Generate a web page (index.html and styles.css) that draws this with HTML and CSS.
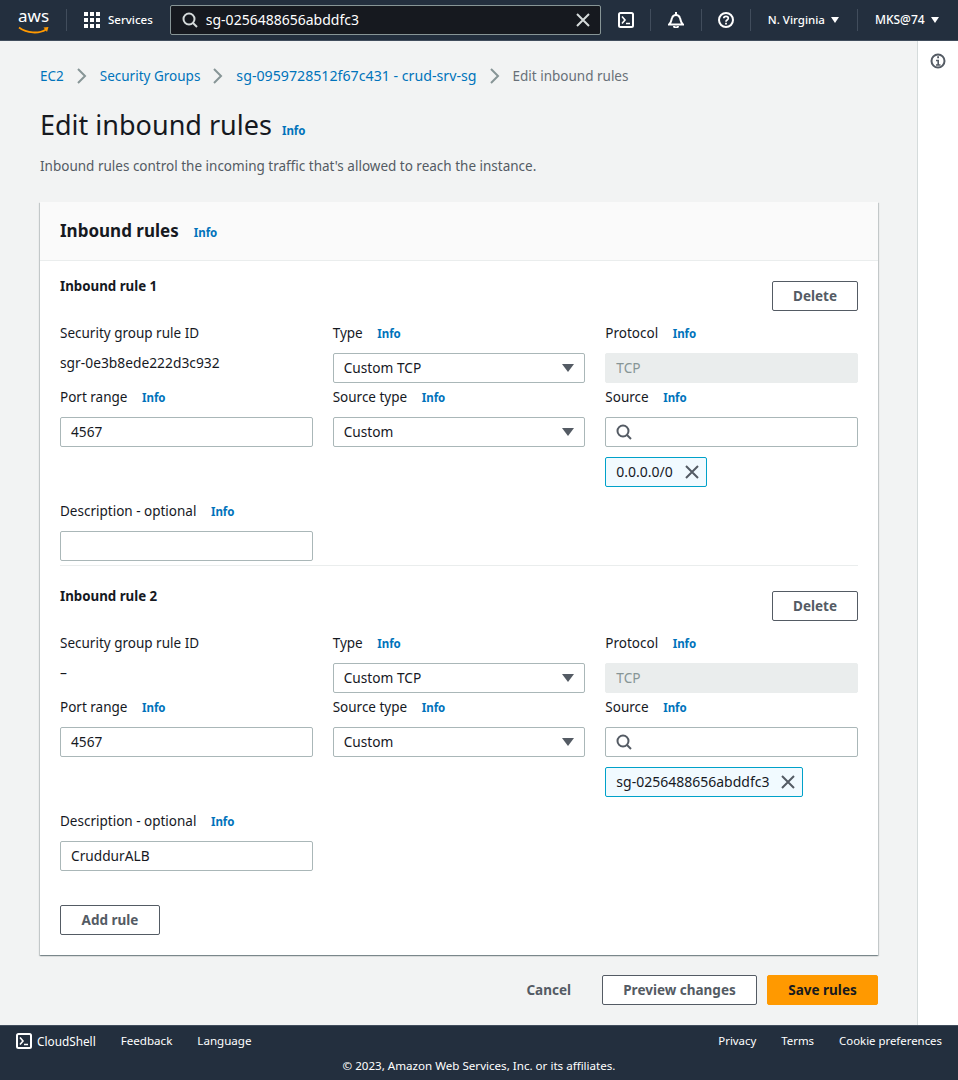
FILE: index.html
```html
<!DOCTYPE html>
<html lang="en">
<head>
<meta charset="utf-8">
<title>Edit inbound rules</title>
<link rel="stylesheet" href="styles.css">
</head>
<body>
<header class="topbar">
  <a class="logo">
    <span class="logo-text">aws</span>
    <svg class="logo-smile" width="32" height="9" viewBox="0 0 32 9"><path d="M1 1.500c8 6 20 6.500 27 2" fill="none" stroke="#f90" stroke-width="1.800"/><path d="M25.500 1.500l5-.5-1.500 5z" fill="#f90"/></svg>
  </a>
  <span class="sep sep-logo"></span>
  <svg class="grid-icon" width="16" height="16" viewBox="0 0 16 16" fill="#fff"><rect width="4" height="4"/><rect x="6" width="4" height="4"/><rect x="12" width="4" height="4"/><rect y="6" width="4" height="4"/><rect x="6" y="6" width="4" height="4"/><rect x="12" y="6" width="4" height="4"/><rect y="12" width="4" height="4"/><rect x="6" y="12" width="4" height="4"/><rect x="12" y="12" width="4" height="4"/></svg>
  <span class="top-text services">Services</span>
  <div class="top-search">
    <svg width="16" height="16" viewBox="0 0 16 16" fill="none" stroke="#d5dbdb" stroke-width="2"><circle cx="7" cy="7" r="5.500"/><path d="M11 11l4 4"/></svg>
    <span class="top-search-text">sg-0256488656abddfc3</span>
    <svg class="top-search-x" width="14" height="14" viewBox="0 0 14 14" stroke="#d5dbdb" stroke-width="2"><path d="M1 1l12 12M13 1L1 13"/></svg>
  </div>
  <svg class="top-icon shell-icon" width="16" height="16" viewBox="0 0 16 16" fill="none" stroke="#fff" stroke-width="2"><rect x="1" y="1" width="14" height="14" rx="1.500"/><path d="M4 4.500L7 8l-3 3.500M8 11.500h4" stroke-width="1.600"/></svg>
  <span class="sep"></span>
  <svg class="top-icon bell-icon" width="16" height="16" viewBox="0 0 16 16" fill="none" stroke="#fff" stroke-width="2"><path d="M1 12.500h14c-2.500-2-2-4-3-6.500C11.300 4 10 3 8 3S4.700 4 4 6c-1 2.500-.5 4.500-3 6.500z"/><path d="M8 0v3M6 14a2 1.500 0 0 0 4 0"/></svg>
  <span class="sep"></span>
  <svg class="top-icon help-icon" width="16" height="16" viewBox="0 0 16 16" fill="none" stroke="#fff" stroke-width="2"><circle cx="8" cy="8" r="7"/><path d="M5.800 6.300C5.800 5 6.800 4.300 8 4.300s2.300.8 2.300 2c0 1.800-2.300 1.700-2.300 3.400" stroke-width="1.700"/><path d="M8 10.800v1.700" stroke-width="1.800"/></svg>
  <span class="sep"></span>
  <span class="top-text menu-text region">N. Virginia <i class="caret-small"></i></span>
  <span class="sep"></span>
  <span class="top-text menu-text user">MKS@74 <i class="caret-small"></i></span>
</header>

<div class="shell">
  <main class="content">
    <nav class="crumbs">
      <a>EC2</a>
      <svg class="crumb-sep" width="10" height="16" viewBox="0 0 10 16" fill="none" stroke="#879596" stroke-width="2"><path d="M1 1l7 7-7 7"/></svg>
      <a>Security Groups</a>
      <svg class="crumb-sep" width="10" height="16" viewBox="0 0 10 16" fill="none" stroke="#879596" stroke-width="2"><path d="M1 1l7 7-7 7"/></svg>
      <a class="crumb-id">sg-0959728512f67c431 - crud-srv-sg</a>
      <svg class="crumb-sep" width="10" height="16" viewBox="0 0 10 16" fill="none" stroke="#879596" stroke-width="2"><path d="M1 1l7 7-7 7"/></svg>
      <span class="crumb-current">Edit inbound rules</span>
    </nav>

    <div class="page-head">
      <h1>Edit inbound rules</h1>
      <a class="info">Info</a>
    </div>
    <p class="page-desc">Inbound rules control the incoming traffic that's allowed to reach the instance.</p>

    <section class="card">
      <div class="card-head">
        <h2>Inbound rules</h2>
        <a class="info">Info</a>
      </div>
      <div class="card-body">

        <div class="rule rule-first">
          <div class="rule-head">
            <h3>Inbound rule 1</h3>
            <button class="btn btn-small">Delete</button>
          </div>
          <div class="rule-grid">
            <div class="field">
              <div class="label">Security group rule ID</div>
              <div class="static">sgr-0e3b8ede222d3c932</div>
            </div>
            <div class="field">
              <div class="label">Type <a class="info">Info</a></div>
              <div class="input select">Custom TCP <i class="caret"></i></div>
            </div>
            <div class="field">
              <div class="label">Protocol <a class="info">Info</a></div>
              <div class="input disabled">TCP</div>
            </div>
            <div class="field">
              <div class="label">Port range <a class="info">Info</a></div>
              <div class="input">4567</div>
            </div>
            <div class="field">
              <div class="label">Source type <a class="info">Info</a></div>
              <div class="input select">Custom <i class="caret"></i></div>
            </div>
            <div class="field">
              <div class="label">Source <a class="info">Info</a></div>
              <div class="input search">
                <svg width="16" height="16" viewBox="0 0 16 16" fill="none" stroke="#545b64" stroke-width="2"><circle cx="7" cy="7" r="5.500"/><path d="M11 11l4 4"/></svg>
              </div>
              <div class="token">0.0.0.0/0
                <svg width="14" height="14" viewBox="0 0 14 14" stroke="#545b64" stroke-width="2"><path d="M1 1l12 12M13 1L1 13"/></svg>
              </div>
            </div>
            <div class="field field-desc">
              <div class="label">Description - optional <a class="info">Info</a></div>
              <div class="input"></div>
            </div>
          </div>
        </div>

        <div class="rule">
          <div class="rule-head">
            <h3>Inbound rule 2</h3>
            <button class="btn btn-small">Delete</button>
          </div>
          <div class="rule-grid">
            <div class="field">
              <div class="label">Security group rule ID</div>
              <div class="static">–</div>
            </div>
            <div class="field">
              <div class="label">Type <a class="info">Info</a></div>
              <div class="input select">Custom TCP <i class="caret"></i></div>
            </div>
            <div class="field">
              <div class="label">Protocol <a class="info">Info</a></div>
              <div class="input disabled">TCP</div>
            </div>
            <div class="field">
              <div class="label">Port range <a class="info">Info</a></div>
              <div class="input">4567</div>
            </div>
            <div class="field">
              <div class="label">Source type <a class="info">Info</a></div>
              <div class="input select">Custom <i class="caret"></i></div>
            </div>
            <div class="field">
              <div class="label">Source <a class="info">Info</a></div>
              <div class="input search">
                <svg width="16" height="16" viewBox="0 0 16 16" fill="none" stroke="#545b64" stroke-width="2"><circle cx="7" cy="7" r="5.500"/><path d="M11 11l4 4"/></svg>
              </div>
              <div class="token">sg-0256488656abddfc3
                <svg width="14" height="14" viewBox="0 0 14 14" stroke="#545b64" stroke-width="2"><path d="M1 1l12 12M13 1L1 13"/></svg>
              </div>
            </div>
            <div class="field field-desc">
              <div class="label">Description - optional <a class="info">Info</a></div>
              <div class="input">CruddurALB</div>
            </div>
          </div>
        </div>

        <button class="btn btn-add">Add rule</button>
      </div>
    </section>

    <div class="actions">
      <a class="cancel">Cancel</a>
      <button class="btn btn-preview">Preview changes</button>
      <button class="btn btn-save">Save rules</button>
    </div>
  </main>

  <aside class="side">
    <svg width="16" height="16" viewBox="0 0 16 16" fill="none" stroke="#545b64" stroke-width="2"><circle cx="8" cy="8" r="6.500"/><path d="M6 7.500h2.200V12M6 12h4.500" stroke-width="1.600"/><path d="M7.200 4.300h1.800" stroke-width="2"/></svg>
  </aside>
</div>

<footer class="footer">
  <div class="footer-row">
    <svg width="16" height="16" viewBox="0 0 16 16" fill="none" stroke="#fff" stroke-width="2"><rect x="1" y="1" width="14" height="14" rx="1.500"/><path d="M4 4.500L7 8l-3 3.500M8 11.500h4" stroke-width="1.600"/></svg>
    <a class="foot-shell">CloudShell</a>
    <a class="foot-link">Feedback</a>
    <a class="foot-link">Language</a>
    <span class="foot-space"></span>
    <a class="foot-right">Privacy</a>
    <a class="foot-link foot-right">Terms</a>
    <a class="foot-link foot-right">Cookie preferences</a>
  </div>
  <div class="copyright">© 2023, Amazon Web Services, Inc. or its affiliates.</div>
</footer>
</body>
</html>
```

FILE: styles.css
```css
* {
  box-sizing: border-box;
}

html, body {
  height: 100%;
}

body {
  margin: 0;
  display: flex;
  flex-direction: column;
  height: 1080px;
  overflow: hidden;
  background: #f2f3f3;
  color: #16191f;
  font-family: "Noto Sans", "Open Sans", sans-serif;
  font-size: 13.5px;
  line-height: 22px;
}

a {
  color: #0073bb;
}

/* top bar */
.topbar {
  display: flex;
  align-items: center;
  flex: none;
  height: 41px;
  padding: 0 0 1px 18px;
  background: #232f3e;
  border-bottom: 1px solid #414d5c;
  color: #fff;
}

.logo {
  position: relative;
  width: 32px;
  height: 30px;
}

.logo-text {
  position: absolute;
  left: 0;
  top: 1px;
  font-size: 17px;
  line-height: 20px;
  color: #fff;
}

.logo-smile {
  position: absolute;
  left: 0;
  top: 21px;
}

.sep {
  flex: none;
  width: 1px;
  height: 22px;
  background: #414d5c;
  margin: 0 17px;
}

.sep-logo {
  margin: 0 17px 0 16px;
}

.top-text {
  font-size: 11.5px;
  font-weight: 500;
}

.services {
  margin: 0 17px 0 8px;
}

.top-search {
  display: flex;
  align-items: center;
  flex: none;
  width: 431px;
  height: 30px;
  padding: 0 10px 0 11px;
  background: #16191f;
  border: 1px solid #879596;
  border-radius: 2px;
}

.top-search-text {
  flex: 1;
  margin-left: 8px;
  font-size: 14px;
}

.shell-icon {
  margin: 0 -1px 0 17px;
}

.help-icon {
  margin: 0 -1px;
}

.menu-text {
  white-space: nowrap;
}

.region {
  margin-right: 1px;
}

.user {
  font-size: 12px;
}

.caret-small {
  display: inline-block;
  width: 0;
  height: 0;
  margin-left: 3px;
  vertical-align: 1px;
  border-left: 4px solid transparent;
  border-right: 4px solid transparent;
  border-top: 6px solid #fff;
}

/* main area */
.shell {
  display: flex;
  flex: 1;
  min-height: 0;
}

.content {
  flex: 1;
  min-width: 0;
  padding: 24px 39px 0 40px;
}

.side {
  flex: none;
  width: 41px;
  padding: 12px 0 0 12px;
  background: #fff;
  border-left: 1px solid #d5dbdb;
}

.side svg {
  display: block;
}

.crumbs {
  display: flex;
  align-items: center;
  height: 22px;
}

.crumb-sep {
  margin: 0 13px;
}

.crumb-id {
  font-size: 14.2px;
}

.crumb-current {
  color: #687078;
}

.page-head {
  display: flex;
  align-items: baseline;
  margin-top: 18px;
}

h1 {
  margin: 0 10px 0 0;
  font-size: 27px;
  font-weight: 400;
  line-height: 40px;
}

.info {
  font-size: 11.5px;
  font-weight: 700;
}

.page-desc {
  margin: 10px 0 0;
  color: #545b64;
}

/* card */
.card {
  margin-top: 25px;
  background: #fff;
  box-shadow: 0 1px 1px 0 rgba(0, 28, 36, 0.3), 1px 1px 1px 0 rgba(0, 28, 36, 0.15), -1px 1px 1px 0 rgba(0, 28, 36, 0.15);
}

.card-head {
  display: flex;
  align-items: baseline;
  height: 59px;
  padding: 17px 20px 0;
  background: #fafafa;
  border-bottom: 1px solid #eaeded;
}

h2 {
  margin: 0 15px 0 0;
  font-size: 17px;
  font-weight: 700;
  line-height: 24px;
}

.card-body {
  padding: 0 20px 20px;
}

.rule {
  padding-top: 20px;
}

.rule-first {
  padding-bottom: 4px;
  margin-bottom: 5px;
  border-bottom: 1px solid #eaeded;
}

.rule-head {
  display: flex;
  justify-content: space-between;
  align-items: flex-start;
  height: 30px;
  margin-bottom: 11px;
}

h3 {
  margin: -6px 0 0;
  font-size: 13.3px;
  font-weight: 700;
  line-height: 22px;
}

.rule-grid {
  display: grid;
  grid-template-columns: repeat(3, 1fr);
  gap: 3px 20px;
}

.field-desc {
  margin-top: 10px;
}

.label {
  height: 22px;
  margin-bottom: 9px;
  white-space: nowrap;
}

.label .info {
  margin-left: 11px;
}

.static {
  height: 30px;
  font-size: 13.8px;
  line-height: 20px;
}

.input {
  position: relative;
  height: 30px;
  padding: 0 10px;
  background: #fff;
  border: 1px solid #aab7b8;
  border-radius: 2px;
  font-size: 13.7px;
  line-height: 28px;
}

.caret {
  position: absolute;
  right: 10px;
  top: 10px;
  width: 0;
  height: 0;
  border-left: 6px solid transparent;
  border-right: 6px solid transparent;
  border-top: 8px solid #545b64;
}

.disabled {
  background: #eaeded;
  border-color: #eaeded;
  color: #879596;
}

.search svg {
  display: block;
  margin-top: 6px;
}

.token {
  display: inline-flex;
  align-items: center;
  gap: 12px;
  height: 30px;
  margin-top: 10px;
  padding: 0 7px 0 10px;
  background: #f1faff;
  border: 1px solid #00a1c9;
  border-radius: 2px;
  font-size: 14px;
}

/* buttons */
.btn {
  height: 30px;
  padding: 0;
  background: #fff;
  border: 1px solid #545b64;
  border-radius: 2px;
  color: #545b64;
  font-family: inherit;
  font-size: 13.5px;
  font-weight: 700;
}

.btn-small {
  width: 86px;
}

.btn-add {
  display: block;
  width: 100px;
  margin-top: 34px;
}

.actions {
  display: flex;
  justify-content: flex-end;
  align-items: center;
  margin-top: 20px;
}

.cancel {
  margin-right: 31px;
  color: #545b64;
  font-weight: 700;
}

.btn-preview {
  width: 155px;
}

.btn-save {
  width: 111px;
  margin-left: 10px;
  background: #ff9900;
  border-color: #ff9900;
  color: #16191f;
}

/* footer */
.footer {
  flex: none;
  height: 55px;
  padding: 5px 16px 0;
  background: #232f3e;
  border-top: 1px solid #414d5c;
  color: #fff;
  font-size: 11.6px;
  line-height: 20px;
}

.footer a {
  color: #fff;
}

.footer-row {
  display: flex;
  align-items: center;
  height: 20px;
}

.foot-shell {
  margin-left: 5px;
  font-size: 11.8px;
}

.foot-link {
  margin-left: 25px;
}

.foot-right {
  font-size: 11.4px;
}

.foot-space {
  flex: 1;
}

.copyright {
  margin-top: 5px;
  text-align: center;
}
```
